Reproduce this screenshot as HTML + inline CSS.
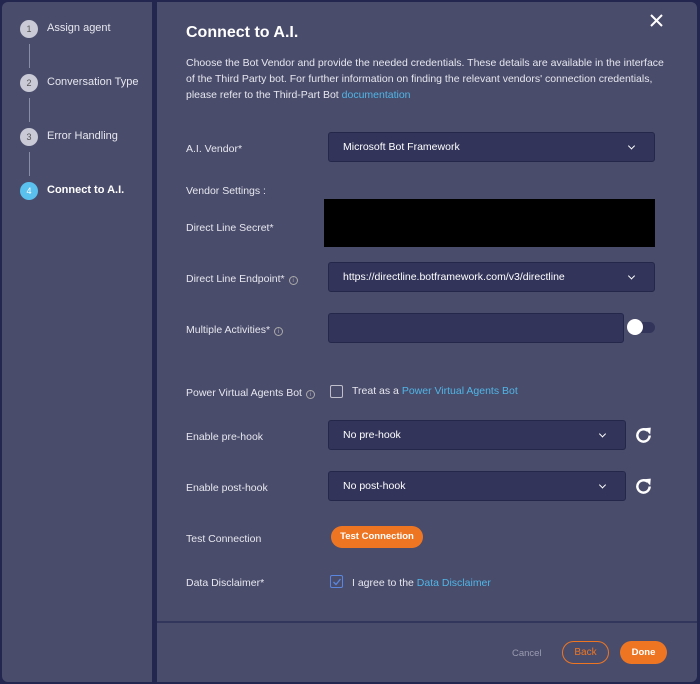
<!DOCTYPE html>
<html><head><style>
*{box-sizing:border-box;margin:0;padding:0}
body{width:700px;height:684px;background:#23264f;font-family:"Liberation Sans",sans-serif;position:relative;overflow:hidden;color:#e6e7ef}
.lp{position:absolute;left:2px;top:2px;width:150px;height:680px;background:#4a4c6b;border-radius:6px 0 0 6px}
.rp{position:absolute;left:157px;top:2px;width:540px;height:680px;background:#4a4c6b;border-radius:0 6px 6px 0}
.step{position:absolute;left:20px;font-size:11px;color:#e6e7ef}
.step .c{position:absolute;left:0;top:0;width:18px;height:18px;border-radius:50%;background:#c9cad6;color:#555;font-size:9px;text-align:center;line-height:18px}
.step .t{position:absolute;left:27px;top:2px;white-space:nowrap}
.vl{position:absolute;left:29px;width:1px;height:24px;background:#8a8ca4}
.a{position:absolute;font-size:11px;white-space:nowrap}
.lbl{position:absolute;left:186px;font-size:10.5px;white-space:nowrap;color:#e6e7ef}
.sel{position:absolute;left:328px;background:#32345a;border:1px solid #25274a;border-radius:3px;font-size:10.5px;padding-left:14px;color:#fff}
.chev{position:absolute;right:20px;top:50%;width:5px;height:5px;border-right:1.6px solid #fff;border-bottom:1.6px solid #fff;transform:translateY(-70%) rotate(45deg)}
.info{display:inline-block;width:9px;height:9px;border:1px solid #aaa;border-radius:50%;font-size:6px;text-align:center;line-height:8px;color:#aaa;margin-left:4px;vertical-align:0}
.link{color:#4fb5e6}
.btn{position:absolute;border-radius:12px;font-size:9.5px;font-weight:bold;text-align:center}
</style></head><body>
<div class="lp"></div>
<div class="step" style="top:20px"><div class="c">1</div><div class="t">Assign agent</div></div>
<div class="vl" style="top:44px"></div>
<div class="step" style="top:74px"><div class="c">2</div><div class="t">Conversation Type</div></div>
<div class="vl" style="top:98px"></div>
<div class="step" style="top:128px"><div class="c">3</div><div class="t">Error Handling</div></div>
<div class="vl" style="top:152px"></div>
<div class="step" style="top:182px"><div class="c" style="background:#5ac0ee;color:#fff">4</div><div class="t" style="font-weight:bold;color:#fff">Connect to A.I.</div></div>

<div class="rp"></div>
<div class="a" style="left:186px;top:24px;font-size:16px;font-weight:bold;color:#fff">Connect to A.I.</div>
<svg style="position:absolute;left:650px;top:14px" width="13" height="13"><path d="M1 1L12 12M12 1L1 12" stroke="#fff" stroke-width="2"/></svg>
<div class="a" style="left:186px;top:55px;font-size:10.5px;line-height:16px;color:#e6e7ef">Choose the Bot Vendor and provide the needed credentials. These details are available in the interface<br>of the Third Party bot. For further information on finding the relevant vendors' connection credentials,<br>please refer to the Third-Part Bot <span class="link">documentation</span></div>

<div class="lbl" style="top:143px">A.I. Vendor*</div>
<div class="sel" style="top:132px;width:327px;height:30px;line-height:28px">Microsoft Bot Framework<div class="chev"></div></div>
<div class="lbl" style="top:185px">Vendor Settings :</div>
<div class="lbl" style="top:222px">Direct Line Secret*</div>
<div style="position:absolute;left:324px;top:199px;width:331px;height:48px;background:#000"></div>
<div class="lbl" style="top:273px">Direct Line Endpoint*<span class="info">i</span></div>
<div class="sel" style="top:262px;width:327px;height:30px;line-height:28px">https://directline.botframework.com/v3/directline<div class="chev"></div></div>
<div class="lbl" style="top:324px">Multiple Activities*<span class="info">i</span></div>
<div class="sel" style="top:313px;width:296px;height:30px"></div>
<div style="position:absolute;left:630px;top:322px;width:25px;height:11px;border-radius:6px;background:#32345a"></div>
<div style="position:absolute;left:627px;top:319px;width:16px;height:16px;border-radius:50%;background:#fff"></div>
<div class="lbl" style="top:387px">Power Virtual Agents Bot<span class="info">i</span></div>
<div style="position:absolute;left:330px;top:385px;width:13px;height:13px;border:1.5px solid #c0c0cc;border-radius:2px"></div>
<div class="a" style="left:352px;top:385px;font-size:10.5px">Treat as a <span class="link">Power Virtual Agents Bot</span></div>
<div class="lbl" style="top:431px">Enable pre-hook</div>
<div class="sel" style="top:420px;width:298px;height:30px;line-height:28px">No pre-hook<div class="chev"></div></div>
<svg style="position:absolute;left:634px;top:426px" width="19" height="19" viewBox="0 0 17 17"><path d="M14 8.5A5.5 5.5 0 1 1 12 4.2" fill="none" stroke="#fff" stroke-width="2.2"/><path d="M9 2L15 1.5L14.5 7.5Z" fill="#fff"/></svg>
<div class="lbl" style="top:482px">Enable post-hook</div>
<div class="sel" style="top:471px;width:298px;height:30px;line-height:28px">No post-hook<div class="chev"></div></div>
<svg style="position:absolute;left:634px;top:477px" width="19" height="19" viewBox="0 0 17 17"><path d="M14 8.5A5.5 5.5 0 1 1 12 4.2" fill="none" stroke="#fff" stroke-width="2.2"/><path d="M9 2L15 1.5L14.5 7.5Z" fill="#fff"/></svg>
<div class="lbl" style="top:533px">Test Connection</div>
<div class="btn" style="left:331px;top:526px;width:92px;height:22px;line-height:21px;background:#ee7623;color:#fff">Test Connection</div>
<div class="lbl" style="top:577px">Data Disclaimer*</div>
<div style="position:absolute;left:330px;top:575px;width:13px;height:13px;border:1.5px solid #5a86e0;border-radius:2px"></div>
<svg style="position:absolute;left:332px;top:577px" width="10" height="10"><path d="M1.5 5L4 7.5L8.5 2" fill="none" stroke="#5a86e0" stroke-width="1.3"/></svg>
<div class="a" style="left:352px;top:577px;font-size:10.5px">I agree to the <span class="link">Data Disclaimer</span></div>

<div style="position:absolute;left:157px;top:621px;width:540px;height:2px;background:#33365c"></div>
<div class="a" style="left:512px;top:648px;font-size:9.5px;color:#9a9cb0">Cancel</div>
<div class="btn" style="left:562px;top:641px;width:47px;height:23px;line-height:22px;border:1px solid #ee7623;color:#ee7623;font-weight:normal;font-size:10px">Back</div>
<div class="btn" style="left:620px;top:641px;width:47px;height:23px;line-height:23px;background:#ee7623;color:#fff">Done</div>
</body></html>
